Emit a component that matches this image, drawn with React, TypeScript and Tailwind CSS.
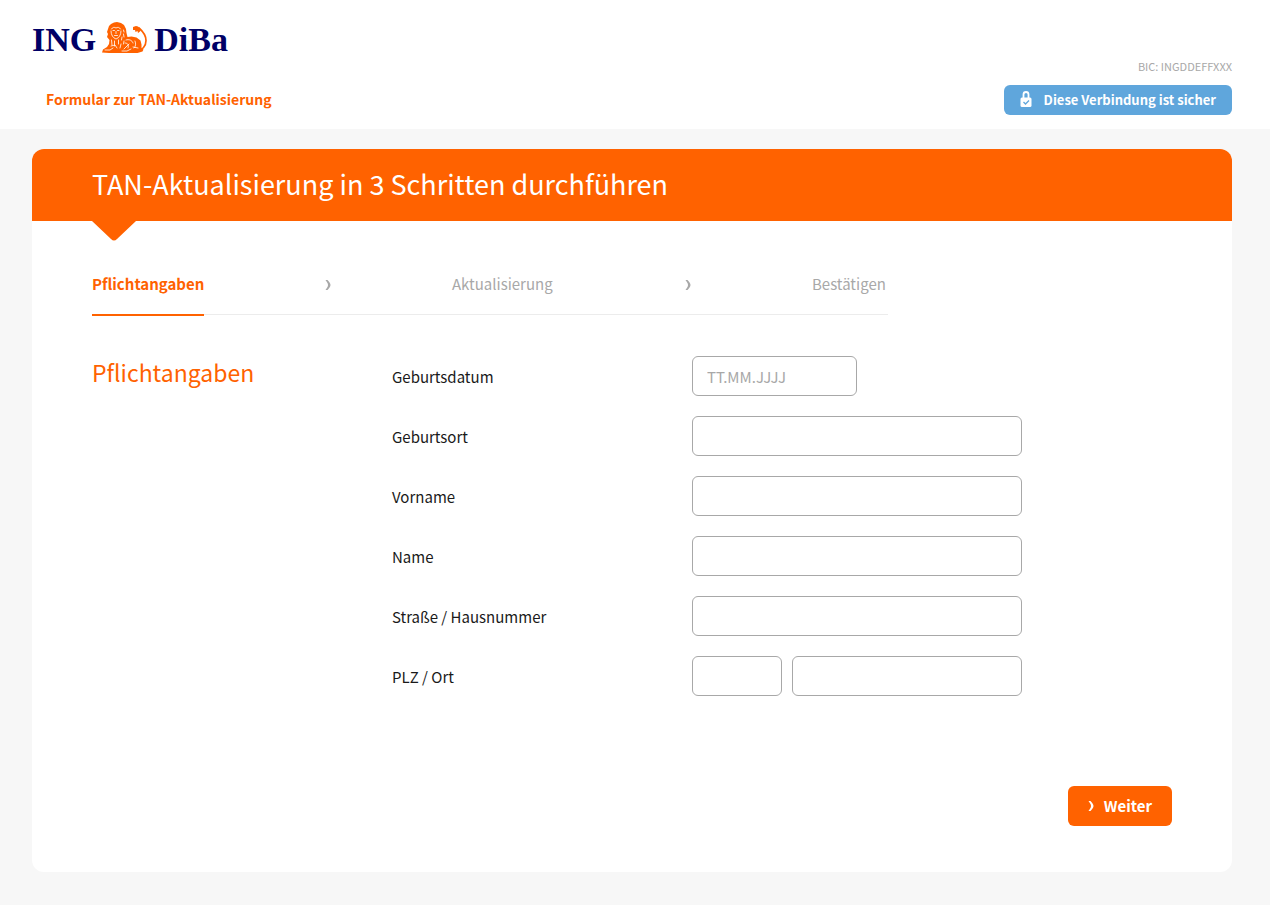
const steps = ['Pflichtangaben', 'Aktualisierung', 'Bestätigen'];

const fields = [
  { id: 'geburtsort', label: 'Geburtsort' },
  { id: 'vorname', label: 'Vorname' },
  { id: 'name', label: 'Name' },
  { id: 'strasse', label: 'Straße / Hausnummer' },
];

const inputClass = 'h-10 rounded-md border border-[#a8a8a8] bg-white px-3.5 text-[15px] text-[#1a1a1a] outline-none placeholder:text-[#a8a8a8] focus:border-[#ff6200]';
const labelClass = 'w-[300px] pt-0.5';

function Lion() {
  return (
    <svg viewBox="0 0 46 31" className="mb-1.5 h-[31px] w-[46px]" aria-hidden="true">
      <path
        fill="#ff6200"
        d="M7 4 9 2l3-1.500L15 0l4 1 3 2 2 4 .5 4 1 4 4-.5 5 1 4 3 1 4 0 4 2 1-1 2-5 1.500-7 .5H14L7 31l-7-.5 1-3 4-2.500 2-3 .5-4L5 15l1-3-1-2L6 7z"
      />
      <path
        fill="none"
        stroke="#ff6200"
        strokeWidth="1.700"
        strokeLinecap="round"
        d="M35 28.500c5 0 9-4 9-10 0-5-3-9-7-12.500"
      />
      <path fill="#ff6200" d="m31 5 3-1 2 .5 3 3-1 2-2 1.500-.5-2-2 1-.5-2-2 0z" />
      <g fill="none" stroke="#fff" strokeWidth=".8" strokeLinecap="round">
        <path d="M9.500 7c1-2 3-2 4.500-1 1.500-1 3.500-1 4.500 1M9 9c0 4 2 7 5 8 3-1 5-4 5-8" />
        <path d="M11 8.500h1.500m3 0H17M14 9.500v2m-1.500 2h3" />
        <path d="m21.500 8 .5 2m-.5 2 .5 3m-2 0-.5 3m-3 0v4m-4-3v5m-3-6 .5 5m9-1-1 4m4-7-.5 3" />
        <path d="M3 28h5l3-2m-2-2 4-1 2 3m5 3h5l4-2m-5-9c3-1 6 0 7 3m-8 0c3 0 4 2 3 5m7-7c1 3 1 5-1 7m-5-4-5 5m9-2 5 1" />
      </g>
    </svg>
  );
}

function Logo() {
  return (
    <div className="flex h-10 items-center gap-1.5 font-['Liberation_Serif',serif] text-[34px] leading-10 font-bold text-[#000066]">
      <span>ING</span>
      <Lion />
      <span>DiBa</span>
    </div>
  );
}

function LockIcon() {
  return (
    <svg viewBox="0 0 12 16" className="mb-0.5 h-4 w-3" aria-hidden="true">
      <path fill="none" stroke="#fff" strokeWidth="1.800" d="M3.500 7V3.500a2.500 2.500 0 0 1 5 0V7" />
      <rect x=".5" y="6.500" width="11" height="9.500" rx="1.500" fill="#fff" />
      <path fill="none" stroke="#5fa6dc" strokeWidth="1.300" d="m3.500 11 2 2 3.500-3.500" />
    </svg>
  );
}

function Chevron({ className }: { className: string }) {
  return (
    <svg viewBox="0 0 6 10" className={className} aria-hidden="true">
      <path fill="currentColor" d="M.5 0h2C4 1.500 5.500 3.500 5.500 5S4 8.500 2.500 10h-2C2 8 3 6.500 3 5S2 2 .5 0z" />
    </svg>
  );
}

export default function App() {
  return (
    <div className="min-h-screen bg-[#f7f7f7] font-['Noto_Sans_CJK_JP',sans-serif] text-[#1a1a1a]">
      <header className="bg-white px-8 pt-5 pb-3.5">
        <div className="max-w-[1200px]">
          <Logo />
          <p className="text-right text-[11px] leading-3 text-[#a8a8a8]">BIC: INGDDEFFXXX</p>
          <div className="mt-[13px] flex items-start justify-between">
            <p className="pl-3.5 text-sm leading-7 font-bold text-[#ff6200]">Formular zur TAN-Aktualisierung</p>
            <div className="flex h-[30px] items-center gap-3 rounded-md bg-[#5fa6dc] px-4 text-[13px] font-bold text-white">
              <LockIcon />
              Diese Verbindung ist sicher
            </div>
          </div>
        </div>
      </header>

      <main className="px-8 py-5">
        <form className="max-w-[1200px] rounded-xl bg-white">
          <div className="relative rounded-t-xl bg-[#ff6200] px-[60px] pb-0.5">
            <h1 className="text-[27px] leading-[70px] text-white">TAN-Aktualisierung in 3 Schritten durchführen</h1>
            <svg viewBox="0 0 44 20" className="absolute top-full left-[60px] h-5 w-11" aria-hidden="true">
              <path fill="#ff6200" d="M0 0h44L25 18q-3 3-6 0z" />
            </svg>
          </div>

          <div className="px-[60px] pt-[51px] pb-[46px]">
            <ol className="flex max-w-[796px] border-b border-[#ececec] text-[15px] leading-6 text-[#a8a8a8]">
              {steps.map((step, i) => (
                <li key={step} className={i < steps.length - 1 ? 'flex w-[360px] items-start justify-between pr-[121px]' : ''}>
                  <span className={i === 0 ? '-mb-0.5 border-b-2 border-[#ff6200] pb-[18px] font-bold text-[#ff6200]' : 'block pb-[18px]'}>
                    {step}
                  </span>
                  {i < steps.length - 1 && <Chevron className="mt-2 h-2.5 w-1.5" />}
                </li>
              ))}
            </ol>

            <div className="mt-[41px] flex">
              <h2 className="w-[300px] shrink-0 text-[23px] leading-8 text-[#ff6200]">Pflichtangaben</h2>
              <div className="flex flex-1 flex-col gap-5 text-[15px]">
                <div className="flex items-center">
                  <label htmlFor="geburtsdatum" className={labelClass}>Geburtsdatum</label>
                  <input id="geburtsdatum" type="text" placeholder="TT.MM.JJJJ" className={`${inputClass} w-[165px]`} />
                </div>
                {fields.map((field) => (
                  <div key={field.id} className="flex items-center">
                    <label htmlFor={field.id} className={labelClass}>{field.label}</label>
                    <input id={field.id} type="text" className={`${inputClass} w-[330px]`} />
                  </div>
                ))}
                <div className="flex items-center">
                  <label htmlFor="plz" className={labelClass}>PLZ / Ort</label>
                  <div className="flex gap-2.5">
                    <input id="plz" type="text" className={`${inputClass} w-[90px]`} />
                    <input type="text" aria-label="Ort" className={`${inputClass} w-[230px]`} />
                  </div>
                </div>
              </div>
            </div>

            <div className="mt-[90px] flex justify-end">
              <button type="button" className="flex h-10 items-center gap-2.5 rounded-md bg-[#ff6200] px-5 text-[15px] font-bold text-white">
                <Chevron className="h-2.5 w-1.5" />
                Weiter
              </button>
            </div>
          </div>
        </form>
      </main>
    </div>
  );
}
